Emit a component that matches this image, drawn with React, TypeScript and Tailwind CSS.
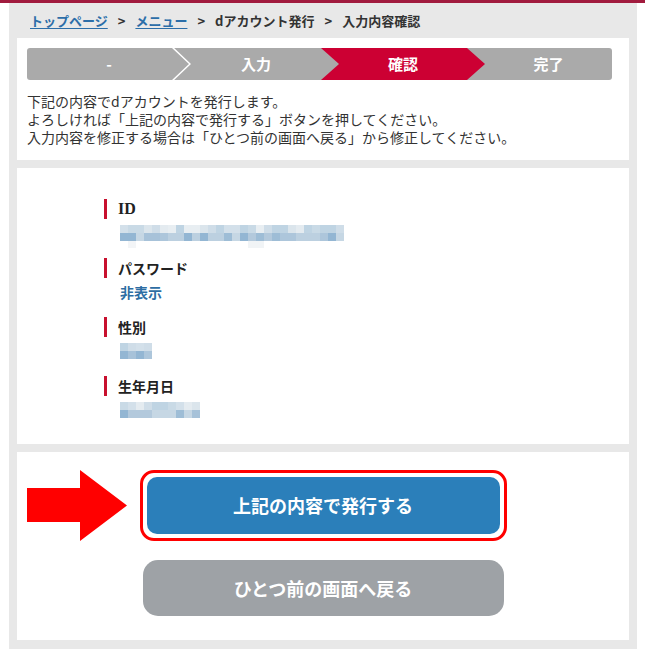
import React from 'react';

const jp = { fontFamily: '"Noto Sans CJK JP", "Noto Sans", sans-serif' };

// pixelated (mosaic) placeholder values
const light = ['#dbe5ec', '#e4ebf0', '#c9dae6', '#d3e0ea', '#bfd4e3', '#e8eef2', '#cfdde8'];
const dark = ['#a7c2d9', '#bcd0e0', '#9ebdd6', '#b3c9dc', '#c6d7e4', '#93b6d3', '#adc6db'];

function rows(count: number, seed: number) {
    const out: string[][] = [[], []];
    let s = seed;
    for (let i = 0; i < count; i++) {
        s = (s * 9301 + 49297) % 233280;
        out[0].push(light[s % light.length]);
        s = (s * 9301 + 49297) % 233280;
        out[1].push(dark[s % dark.length]);
    }
    return out;
}

function Mosaic({ count, seed, tail }: { count: number; seed: number; tail?: boolean }) {
    const r = rows(count, seed);
    return (
        <div className="flex flex-col">
            {r.map((row, i) => (
                <div key={i} className="flex">
                    {row.map((c, j) => (
                        <div key={j} className="w-2 h-2" style={{ backgroundColor: c }} />
                    ))}
                </div>
            ))}
            {tail && (
                <div className="flex h-[7px] -mb-[7px]">
                    <div className="w-2" />
                    <div className="w-2 bg-[#f3f5f7]" />
                    <div className="w-[112px]" />
                    <div className="w-4 bg-[#f1f4f6]" />
                </div>
            )}
        </div>
    );
}

function Label({ children, serif }: { children: React.ReactNode; serif?: boolean }) {
    return (
        <div className="flex items-center h-5">
            <div className="w-[3px] h-5 bg-[#c8102e]" />
            <span
                className={`ml-[11px] font-bold text-[#222] ${serif ? 'text-[16px]' : 'text-[14px]'}`}
                style={serif ? { fontFamily: '"Liberation Serif", serif' } : jp}
            >
                {children}
            </span>
        </div>
    );
}

export default function App() {
    return (
        <div className="min-h-[649px] bg-white" style={jp}>
            <div className="h-[3px] bg-[#a11b3e]" />
            <div className="ml-[9px] w-[628px] bg-[#e8e8e8] px-2 pb-[9px] min-h-[646px]">
                <nav className="h-[35px] flex items-center pl-[13px] text-[13px] font-bold text-[#333] gap-[10px]">
                    <a className="text-[#2c6ea8] underline underline-offset-2">トップページ</a>
                    <span>&gt;</span>
                    <a className="text-[#2c6ea8] underline underline-offset-2">メニュー</a>
                    <span>&gt;</span>
                    <span>dアカウント発行</span>
                    <span>&gt;</span>
                    <span>入力内容確認</span>
                </nav>

                <div className="flex flex-col gap-2">
                    <section className="bg-white pt-[10px] pb-[14px] px-[10px]">
                        <div className="flex h-8 w-[585px] rounded-[3px] overflow-hidden bg-[#aaaaaa] text-white text-[15px] font-bold">
                            <div className="relative w-[164px] flex items-center justify-center shrink-0">
                                -
                                <svg className="absolute right-0 top-0 h-8 w-[19px]" viewBox="0 0 19 32">
                                    <polyline points="0,-1 18,16 0,33" fill="none" stroke="#fff" strokeWidth="1.5" />
                                </svg>
                            </div>
                            <div className="w-[166px] -ml-[18px] flex items-center justify-center shrink-0">入力</div>
                            <div className="w-[164px] -ml-[18px] flex items-center justify-center shrink-0 bg-[#cc0033] [clip-path:polygon(0_0,calc(100%-18px)_0,100%_50%,calc(100%-18px)_100%,0_100%,18px_50%)]">
                                確認
                            </div>
                            <div className="flex-1 flex items-center justify-center">完了</div>
                        </div>
                        <p className="mt-[12px] text-[14px] leading-[18px] text-[#333]">
                            下記の内容でdアカウントを発行します。
                            <br />
                            よろしければ「上記の内容で発行する」ボタンを押してください。
                            <br />
                            入力内容を修正する場合は「ひとつ前の画面へ戻る」から修正してください。
                        </p>
                    </section>

                    <section className="bg-white pt-[31px] pb-[26px] pl-[87px] flex flex-col gap-[17px]">
                        <div className="flex flex-col gap-[6px]">
                            <Label serif>ID</Label>
                            <div className="pl-[16px]"><Mosaic count={28} seed={7} tail /></div>
                        </div>
                        <div className="flex flex-col gap-[6px]">
                            <Label>パスワード</Label>
                            <div className="pl-[16px] h-4 flex items-center text-[14px] font-bold text-[#2d6da3]">非表示</div>
                        </div>
                        <div className="flex flex-col gap-[6px]">
                            <Label>性別</Label>
                            <div className="pl-[16px]"><Mosaic count={4} seed={3} /></div>
                        </div>
                        <div className="flex flex-col gap-[6px]">
                            <Label>生年月日</Label>
                            <div className="pl-[16px]"><Mosaic count={10} seed={11} /></div>
                        </div>
                    </section>

                    <section className="bg-white pt-[18px] pb-[24px] flex flex-col items-center gap-[19px]">
                        <div className="relative">
                            <svg className="absolute right-full mr-[13px] top-0 w-[100px] h-[71px]" viewBox="0 0 100 71">
                                <polygon points="0,18 53,18 53,0 100,35.5 53,71 53,52 0,52" fill="#ff0000" />
                            </svg>
                            <div className="w-[367px] h-[71px] rounded-[14px] border-[3px] border-[#ff0000] p-1 bg-white">
                                <button className="w-full h-full rounded-[10px] bg-[#2b7fba] text-white text-[18px] font-bold">
                                    上記の内容で発行する
                                </button>
                            </div>
                        </div>
                        <button className="w-[361px] h-[56px] rounded-[15px] bg-[#9ea2a6] text-white text-[18px] font-bold">
                            ひとつ前の画面へ戻る
                        </button>
                    </section>
                </div>
            </div>
        </div>
    );
}
